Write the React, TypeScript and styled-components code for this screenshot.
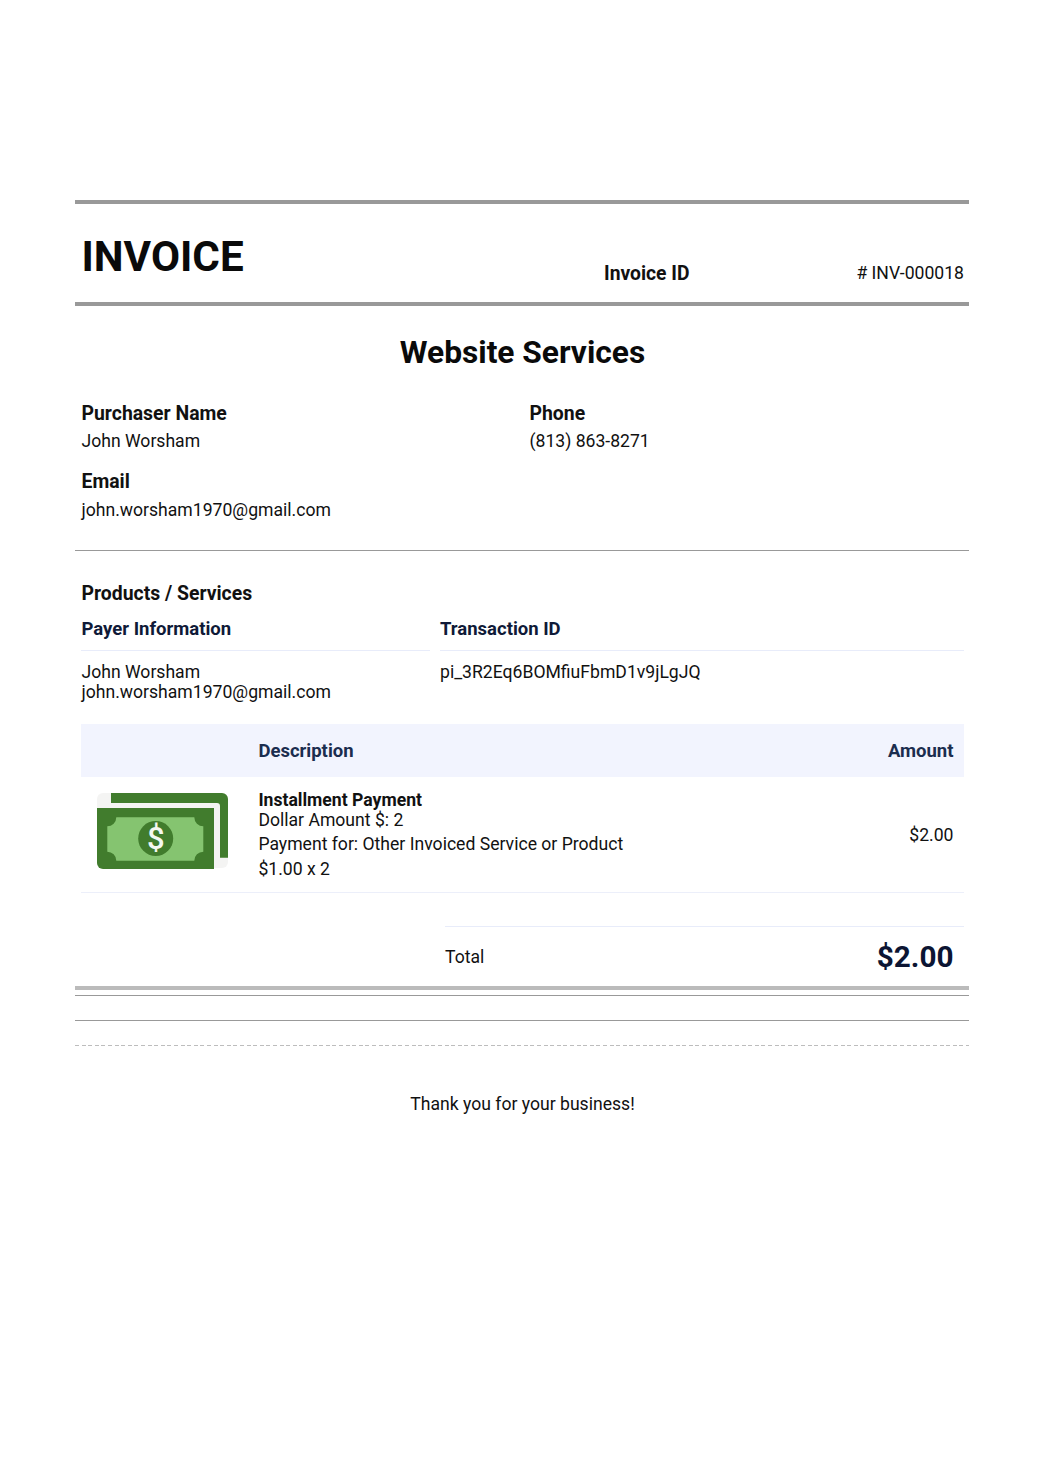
import React from "react";
import styled, { createGlobalStyle } from "styled-components";

const Global = createGlobalStyle`
  html, body { margin: 0; padding: 0; background: #fff; }
  body { font-family: Roboto, "Liberation Sans", sans-serif; color: #111; }
`;

const Page = styled.div`
  width: 1044px;
  height: 1477px;
  padding: 200px 75px 0;
  box-sizing: border-box;
  overflow: hidden;
`;

const Rule = styled.div<{ $h?: number; $color?: string; $mt?: number }>`
  border-top: ${(p) => p.$h ?? 1}px solid ${(p) => p.$color ?? "#999"};
  margin-top: ${(p) => p.$mt ?? 0}px;
`;

const DashedRule = styled.div`
  height: 1px;
  margin-top: 24px;
  background: repeating-linear-gradient(to right, #bdbdbd 0 4px, transparent 4px 6.6px);
`;

const Header = styled.div`
  height: 98px;
  display: flex;
  align-items: flex-start;
  padding: 0 5px 0 6.5px;
`;

const InvoiceTitle = styled.h1`
  margin: 27px 0 0;
  font-size: 42.2px;
  line-height: 52px;
  font-weight: 700;
  color: #0a0a0a;
  width: 522.5px;
`;

const InvoiceLabel = styled.div`
  margin-top: 59px;
  font-size: 19.3px;
  line-height: 22px;
  font-weight: 700;
  color: #111;
`;

const InvoiceNumber = styled.div`
  margin: 59px 0 0 auto;
  font-size: 17.6px;
  line-height: 21px;
  color: #111;
`;

const Heading = styled.h2`
  margin: 28px 0 0;
  padding-left: 1px;
  text-align: center;
  font-size: 31.7px;
  line-height: 38px;
  font-weight: 700;
  color: #0a0a0a;
`;

const Contact = styled.div`
  display: grid;
  grid-template-columns: 448px 1fr;
  padding: 0 6.5px;
  margin-top: 31px;
`;

const ContactCell = styled.div<{ $h: number }>`
  height: ${(p) => p.$h}px;
`;

const Label = styled.div`
  font-size: 19.4px;
  line-height: 22px;
  font-weight: 700;
  color: #111;
`;

const Value = styled.div`
  margin-top: 6px;
  font-size: 17.6px;
  line-height: 21px;
  color: #111;
`;

const EmailValue = styled(Value)`
  margin-top: 7px;
`;

const SectionTitle = styled.div`
  margin: 32px 0 0 6.5px;
  font-size: 19.4px;
  line-height: 22px;
  font-weight: 700;
  color: #111;
`;

const PayerGrid = styled.div`
  display: grid;
  grid-template-columns: 349px 524px;
  column-gap: 10px;
  margin: 13px 0 0 6px;
`;

const PayerHead = styled.div<{ $inset?: number }>`
  font-size: 18.5px;
  line-height: 22px;
  font-weight: 700;
  color: #0f1a38;
  padding: 0 0 10px ${(p) => p.$inset ?? 0.5}px;
  border-bottom: 1px solid #e8ecfa;
`;

const PayerBody = styled.div<{ $inset?: number }>`
  padding: 11px 0 0 ${(p) => p.$inset ?? 0.5}px;
  font-size: 17.6px;
  line-height: 20px;
  color: #111;
`;

const Table = styled.div`
  margin: 22px 5px 0 6px;
`;

const TableHead = styled.div`
  height: 53px;
  background: #f2f4fe;
  display: flex;
  align-items: center;
  padding: 0 10.5px 0 177.4px;
  font-size: 18.5px;
  font-weight: 700;
  color: #1b2d4f;
  justify-content: space-between;
`;

const ItemRow = styled.div`
  height: 115px;
  display: flex;
  align-items: flex-start;
  border-bottom: 1px solid #eceffa;
  padding-right: 10.5px;
`;

const Thumb = styled.svg`
  flex: none;
  width: 132px;
  height: 76px;
  margin: 16px 0 0 16px;
`;

const ItemInfo = styled.div`
  margin: 13px 0 0 29.4px;
  flex: 1;
  font-size: 17.6px;
  color: #111;
`;

const ItemName = styled.div`
  font-size: 17.6px;
  line-height: 20px;
  font-weight: 700;
  color: #111;
`;

const ItemLine = styled.div`
  line-height: 25px;
`;

const ItemFirstLine = styled.div`
  line-height: 21.5px;
`;

const ItemAmount = styled.div`
  margin-top: 48px;
  font-size: 17.6px;
  line-height: 21px;
  color: #111;
`;

const TotalRow = styled.div`
  margin: 33px 0 0 364px;
  border-top: 1px solid #e8ecfa;
  height: 59px;
  display: flex;
  align-items: center;
  justify-content: space-between;
  padding-right: 10.5px;
`;

const TotalLabel = styled.div`
  font-size: 17.6px;
  color: #111;
`;

const TotalValue = styled.div`
  font-size: 29.7px;
  font-weight: 700;
  color: #0c1533;
`;

const Thanks = styled.div`
  margin-top: 48px;
  padding-left: 1px;
  text-align: center;
  font-size: 17.6px;
  line-height: 21px;
  color: #111;
`;

export default function App() {
  return (
    <Page>
      <Global />
      <Rule $h={4} />
      <Header>
        <InvoiceTitle>INVOICE</InvoiceTitle>
        <InvoiceLabel>Invoice ID</InvoiceLabel>
        <InvoiceNumber># INV-000018</InvoiceNumber>
      </Header>
      <Rule $h={4} />
      <Heading>Website Services</Heading>
      <Contact>
        <ContactCell $h={68}>
          <Label>Purchaser Name</Label>
          <Value>John Worsham</Value>
        </ContactCell>
        <ContactCell $h={68}>
          <Label>Phone</Label>
          <Value>(813) 863-8271</Value>
        </ContactCell>
        <ContactCell $h={68}>
          <Label>Email</Label>
          <EmailValue>john.worsham1970@gmail.com</EmailValue>
        </ContactCell>
      </Contact>
      <Rule $mt={11} />
      <SectionTitle>Products / Services</SectionTitle>
      <PayerGrid>
        <PayerHead>Payer Information</PayerHead>
        <PayerHead $inset={0}>Transaction ID</PayerHead>
        <PayerBody>
          John Worsham
          <br />
          john.worsham1970@gmail.com
        </PayerBody>
        <PayerBody $inset={0}>pi_3R2Eq6BOMfiuFbmD1v9jLgJQ</PayerBody>
      </PayerGrid>
      <Table>
        <TableHead>
          <span>Description</span>
          <span>Amount</span>
        </TableHead>
        <ItemRow>
          <Thumb viewBox="0 0 132 76">
            <rect x="0" y="0" width="131" height="75" rx="6" fill="#f4f4f3" />
            <path d="M14 0H125a6 6 0 0 1 6 6v58.700h-8V13a3 3 0 0 0-3-3H14z" fill="#417c2d" />
            <path d="M0 15h117v61H6a6 6 0 0 1-6-6z" fill="#417c2d" />
            <path
              d="M19.300 24.300h78a9 9 0 0 0 9 9v25.400a9 9 0 0 0-9 9h-78a9 9 0 0 0-9-9V33.300a9 9 0 0 0 9-9z"
              fill="#85c470"
            />
            <circle cx="58.700" cy="45.500" r="17.500" fill="#417c2d" />
            <text
              x="58.700"
              y="56"
              textAnchor="middle"
              fontFamily="Roboto, sans-serif"
              fontWeight="500"
              fontSize="31"
              fill="#f4f8f1"
            >
              $
            </text>
          </Thumb>
          <ItemInfo>
            <ItemName>Installment Payment</ItemName>
            <ItemFirstLine>Dollar Amount $: 2</ItemFirstLine>
            <ItemLine>Payment for: Other Invoiced Service or Product</ItemLine>
            <ItemLine>$1.00 x 2</ItemLine>
          </ItemInfo>
          <ItemAmount>$2.00</ItemAmount>
        </ItemRow>
        <TotalRow>
          <TotalLabel>Total</TotalLabel>
          <TotalValue>$2.00</TotalValue>
        </TotalRow>
      </Table>
      <Rule $h={4} $color="#bbb" />
      <Rule $mt={5} />
      <Rule $mt={24} />
      <DashedRule />
      <Thanks>Thank you for your business!</Thanks>
    </Page>
  );
}
